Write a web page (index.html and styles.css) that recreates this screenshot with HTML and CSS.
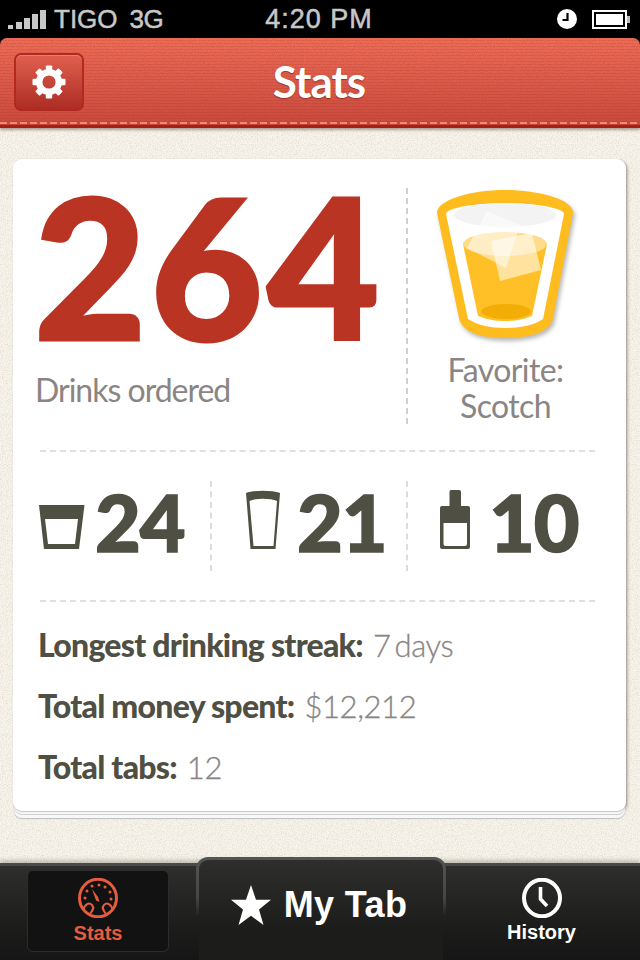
FILE: index.html
```html
<!DOCTYPE html>
<html lang="en">
<head>
<meta charset="utf-8">
<title>Stats</title>
<link rel="stylesheet" href="styles.css">
</head>
<body>
<div class="app">
  <div class="status">
    <div class="status-left">
      <svg class="signal" viewBox="0 0 38 19"><rect x="0" y="15" width="5" height="4"/><rect x="8" y="12" width="6" height="7"/><rect x="16" y="8" width="6" height="11"/><rect x="24" y="4" width="6" height="15"/><rect x="32" y="0" width="6" height="19"/></svg>
      <span class="carrier">TIGO</span><span class="net">3G</span>
    </div>
    <div class="time">4:20 PM</div>
    <div class="status-right">
      <svg class="alarm" viewBox="0 0 20 20"><circle cx="10" cy="10" r="10" fill="#fff"/><path d="M10.500 4v7H5.500" fill="none" stroke="#000" stroke-width="2.200"/></svg>
      <svg class="battery" viewBox="0 0 38 19"><rect x="1" y="1" width="33" height="17" fill="none" stroke="#fff" stroke-width="2"/><rect x="4" y="4" width="27" height="11" fill="#fff"/><rect x="35" y="6" width="3" height="7" fill="#bbb"/></svg>
    </div>
  </div>

  <header class="nav">
    <div class="nav-side">
      <button class="gear-btn" type="button" aria-label="Settings">
        <svg class="gear" viewBox="-17 -17 34 34">
          <circle r="9.800" fill="none" stroke="#fff" stroke-width="6.400"/>
          <g fill="#fff">
            <rect x="-3.200" y="-16.500" width="6.400" height="6" rx="1"/>
            <rect x="-3.200" y="-16.500" width="6.400" height="6" rx="1" transform="rotate(45)"/>
            <rect x="-3.200" y="-16.500" width="6.400" height="6" rx="1" transform="rotate(90)"/>
            <rect x="-3.200" y="-16.500" width="6.400" height="6" rx="1" transform="rotate(135)"/>
            <rect x="-3.200" y="-16.500" width="6.400" height="6" rx="1" transform="rotate(180)"/>
            <rect x="-3.200" y="-16.500" width="6.400" height="6" rx="1" transform="rotate(225)"/>
            <rect x="-3.200" y="-16.500" width="6.400" height="6" rx="1" transform="rotate(270)"/>
            <rect x="-3.200" y="-16.500" width="6.400" height="6" rx="1" transform="rotate(315)"/>
          </g>
        </svg>
      </button>
    </div>
    <h1 class="nav-title">Stats</h1>
    <div class="nav-side"></div>
  </header>

  <main class="content">
    <section class="card">
      <div class="hero">
        <div class="hero-main">
          <div class="big-num">264</div>
          <div class="big-label">Drinks ordered</div>
        </div>
        <div class="hero-fav">
          <svg class="scotch" viewBox="430 185 155 160">
            <path fill="#ffbc1f" d="M437 213C437 200 470 190 505 190S574 200 573 213L553 318C551 332 530 338 505 338S462 332 459 318Z"/>
            <path fill="#fff" d="M446 214C446 208 475 203 505 203S564 208 564 214L543 319C535 325 520 328 505 328S477 325 468 319Z"/>
            <ellipse cx="505" cy="215" rx="51" ry="12" fill="#f3f3f3"/>
            <path fill="#ffbf26" d="M463 244L478 316C488 320 496 321 505 321S522 320 532 316L547 244Z"/>
            <ellipse cx="505" cy="244" rx="42" ry="12" fill="#ffdc8a"/>
            <ellipse cx="506" cy="311.500" rx="25" ry="7.500" fill="#f2ae05"/>
            <path fill="#fff" fill-opacity=".5" d="M487 211L520 225 506 268 467 248Z"/>
            <path fill="#fff" fill-opacity=".55" d="M491 241L532 233 541 270 500 281Z"/>
          </svg>
          <div class="fav-label">Favorite:<br>Scotch</div>
        </div>
      </div>

      <div class="counts">
        <div class="count count-a">
          <svg class="ico-rock" viewBox="0 0 46 44"><path fill="#4f4f43" fill-rule="evenodd" d="M0 0H45.500L40 44H5ZM6 14L9 39H36L39 14Z"/></svg>
          <span class="count-num">24</span>
        </div>
        <div class="count count-b">
          <svg class="ico-pint" viewBox="0 0 34 59"><path fill="#4f4f43" fill-rule="evenodd" d="M0 3C8 0 26 0 34 3L29.500 59H4.500ZM3.500 11L7.500 56H27.500L31 11C24 8 10 8 3.500 11Z"/></svg>
          <span class="count-num">21</span>
        </div>
        <div class="count count-c">
          <svg class="ico-bottle" viewBox="0 0 30 59"><path fill="#4f4f43" fill-rule="evenodd" d="M11 0H19Q21 0 21 2V16H28Q30 16 30 18V57Q30 59 28 59H2Q0 59 0 57V18Q0 16 2 16H9.500V2Q9.500 0 11 0ZM3.500 33V54Q3.500 56 5.500 56H25Q27 56 27 54V33Z"/></svg>
          <span class="count-num">10</span>
        </div>
      </div>

      <ul class="facts">
        <li class="fact"><b class="fact-key">Longest drinking streak:</b><span class="fact-val">7 days</span></li>
        <li class="fact"><b class="fact-key">Total money spent:</b><span class="fact-val">$12,212</span></li>
        <li class="fact"><b class="fact-key">Total tabs:</b><span class="fact-val">12</span></li>
      </ul>
    </section>
  </main>

  <nav class="tabbar">
    <div class="tab-slot tab-slot-left">
      <div class="tab tab-active">
        <svg class="tab-ico" viewBox="0 0 40 40" fill="none" stroke="#e55c3f">
          <ellipse cx="20" cy="20" rx="18.500" ry="18.800" stroke-width="3"/>
          <path stroke-width="2" d="M5 32C7 26 11 24 14 27S14 33 12 36M35 32C33 26 29 24 26 27S26 33 28 36"/>
          <path fill="#e55c3f" stroke="none" d="M14 11L20 19 21.500 24 18 22.500Z"/>
          <g fill="#e55c3f" stroke="none"><circle cx="7" cy="20" r="1.500"/><circle cx="9" cy="13" r="1.500"/><circle cx="14" cy="8" r="1.500"/><circle cx="21" cy="7" r="1.500"/><circle cx="27" cy="9" r="1.500"/><circle cx="32" cy="14" r="1.500"/><circle cx="33" cy="21" r="1.500"/></g>
        </svg>
        <span class="tab-label label-active">Stats</span>
      </div>
    </div>
    <div class="tab-main">
      <svg class="star" viewBox="0 0 40 40"><path fill="#fff" d="M20 0L25 14.800H40L28 24.500 32.500 40 20 30.800 7.500 40 12 24.500 0 14.800H15Z"/></svg>
      <span class="tab-main-label">My Tab</span>
    </div>
    <div class="tab-slot tab-slot-right">
      <div class="tab">
        <svg class="tab-ico" viewBox="0 0 40 40" fill="none" stroke="#fff"><ellipse cx="20" cy="20" rx="18" ry="18.300" stroke-width="4"/><path stroke-width="3.600" d="M18.500 9V21L25 28"/></svg>
        <span class="tab-label">History</span>
      </div>
    </div>
  </nav>
</div>
</body>
</html>
```
FILE: styles.css
```css
* { box-sizing: border-box; }
html, body { margin: 0; padding: 0; }
body { width: 640px; height: 960px; overflow: hidden; background: #000; }
.app { width: 640px; height: 960px; display: flex; flex-direction: column; }

.status { height: 38px; background: #000; display: grid; grid-template-columns: 1fr auto 1fr; align-items: center; padding: 0 10px 0 8px; color: #c8c8c8; font: 26px/38px "Liberation Sans", sans-serif; -webkit-text-stroke: .5px #c8c8c8; }
.status-left { display: flex; align-items: center; }
.signal { width: 38px; height: 19px; fill: #c8c8c8; margin-right: 8px; }
.net { margin-left: 12px; letter-spacing: -.5px; }
.time { font-size: 27px; letter-spacing: 1px; }
.status-right { display: flex; align-items: center; justify-content: flex-end; gap: 15px; }
.alarm { width: 20px; height: 20px; }
.battery { width: 38px; height: 19px; }

.nav { height: 90px; display: grid; grid-template-columns: 1fr auto 1fr; align-items: start; border-radius: 7px 7px 0 0; position: relative; z-index: 1; border-bottom: 3px solid #a91d12; box-shadow: 0 2px 3px rgba(60,40,20,.4);
  background:
    repeating-linear-gradient(0deg, rgba(120,20,10,.1) 0 1px, transparent 1px 3px),
    url("data:image/svg+xml,%3Csvg xmlns='http://www.w3.org/2000/svg' width='200' height='200'%3E%3Cfilter id='n'%3E%3CfeTurbulence type='fractalNoise' baseFrequency='.9' numOctaves='2'/%3E%3CfeColorMatrix values='0 0 0 0 .4 0 0 0 0 .05 0 0 0 0 .03 0 0 0 .6 -.2'/%3E%3C/filter%3E%3Crect width='200' height='200' filter='url(%23n)'/%3E%3C/svg%3E"),
    linear-gradient(#f2705a, #cc4a3e); }
.nav::after { content: ""; height: 2px; background: repeating-linear-gradient(90deg, #f08a72 0 7px, transparent 7px 10px); position: absolute; left: 0; right: 0; bottom: 1px; }
.nav-side { padding: 15px 0 0 14px; }
.gear-btn { display: flex; width: 70px; height: 58px; padding: 0; align-items: center; justify-content: center; border: 2px solid #b3291f; border-radius: 7px; background: linear-gradient(#e0604f, #ad2c24); box-shadow: inset 0 1px 0 rgba(255,255,255,.2); }
.gear { width: 34px; height: 34px; }
.nav-title { margin: 15px 2px 0 0; color: #fff; font: 700 44px/56px Lato, sans-serif; letter-spacing: -1px; text-shadow: 0 1px 1px rgba(110,20,10,.6); }

.content { flex: 1; padding: 31px 14px 0 13px; min-height: 0;
  background:
    url("data:image/svg+xml,%3Csvg xmlns='http://www.w3.org/2000/svg' width='320' height='320'%3E%3Cfilter id='n'%3E%3CfeTurbulence type='fractalNoise' baseFrequency='.8' numOctaves='3'/%3E%3CfeColorMatrix values='0 0 0 0 .55 0 0 0 0 .48 0 0 0 0 .36 0 0 0 .9 -.38'/%3E%3C/filter%3E%3Crect width='320' height='320' filter='url(%23n)'/%3E%3C/svg%3E"),
    #f7f4ec; }
.card { height: 652px; padding: 0 31px 0 27px; background: #fff; border-radius: 9px; box-shadow: 0 1px 1px #c5c5c5, 1px 0 1px rgba(0,0,0,.12), 0 4px 0 -1px #f8f8f8, 0 5px 0 -1px #cfcfcf, 0 8px 0 -1px #f8f8f8, 0 9px 1px -1px #bdbdbd, 2px 2px 3px rgba(90,80,60,.35); }

.hero { height: 293px; display: flex; align-items: flex-start; border-bottom: 2px dashed #e0e0e0; }
.hero-main { width: 366px; flex: none; padding-top: 30px; }
.big-num { color: #b93423; font: 900 194px/153px Lato, sans-serif; letter-spacing: 4px; margin-left: -6px; -webkit-text-stroke: 3px #b93423; white-space: nowrap; }
.big-label { margin-top: 28px; margin-left: -5px; color: #8a8583; font: 400 32px/40px Lato, sans-serif; letter-spacing: -1px; }
.hero-fav { width: 200px; flex: none; height: 236px; margin-top: 29px; border-left: 2px dashed #d0d0d0; display: flex; flex-direction: column; align-items: center; }
.scotch { width: 155px; height: 160px; margin: -3px 0 0 0; flex: none; filter: drop-shadow(2px 3px 2px rgba(0,0,0,.28)); }
.fav-label { margin-top: 7px; color: #8a8583; font: 400 32px/36px Lato, sans-serif; letter-spacing: -.6px; text-align: center; margin-right: 3px; }

.counts { height: 150px; display: flex; align-items: center; border-bottom: 2px dashed #e0e0e0; }
.count { height: 90px; display: flex; align-items: center; }
.count + .count { border-left: 2px dashed #dcdcdc; }
.count-a { width: 170px; gap: 10px; }
.count-b { width: 196px; padding-left: 34px; gap: 17px; }
.count-c { flex: 1; padding-left: 32px; gap: 19px; }
.count-num { color: #4f4f43; font: 900 79px/82px Lato, sans-serif; letter-spacing: -1px; padding-bottom: 8px; -webkit-text-stroke: 1.500px #4f4f43; }
.ico-rock { width: 46px; height: 44px; margin-top: 2px; margin-left: -1px; }
.ico-pint { width: 34px; height: 59px; margin-bottom: 13px; }
.ico-bottle { width: 30px; height: 59px; margin-bottom: 13px; }

.facts { list-style: none; margin: 0 0 0 -2px; padding: 12px 0 0; }
.fact { height: 61px; display: flex; align-items: center; gap: 10px; }
.fact-key { color: #4f4f43; font: 900 32px/40px Lato, sans-serif; letter-spacing: -.75px; }
.fact-val { color: #8a8583; font: 300 31px/40px Lato, sans-serif; letter-spacing: -.4px; word-spacing: -4px; -webkit-text-stroke: .3px #8a8583; }

.tabbar { height: 97px; flex: none; display: flex; position: relative; z-index: 2; border-top: 3px solid #4a4a48; box-shadow: 0 -3px 4px rgba(60,50,40,.25); background: linear-gradient(#2e2e2d, #1b1b1a 70%, #161616); }
.tab-slot { padding: 5px 0 0; display: flex; }
.tab-slot-left { width: 196px; padding-left: 28px; }
.tab-slot-right { width: 194px; justify-content: center; padding-right: 3px; }
.tab { width: 140px; height: 80px; display: flex; flex-direction: column; align-items: center; padding-top: 7px; }
.tab-active { background: #121212; border-radius: 5px; box-shadow: 0 0 0 1px #2c2c2c; }
.tab-ico { width: 40px; height: 40px; flex: none; }
.tab-label { color: #fff; font: 700 20px/24px "Liberation Sans", sans-serif; margin-top: 2px; }
.label-active { color: #e55c3f; margin-top: 3px; }
.tab-main { width: 250px; height: 103px; margin-top: -9px; flex: none; display: flex; align-items: flex-start; justify-content: center; gap: 13px; padding: 25px 4px 0 0; border: 3px solid transparent; border-bottom: 0; border-radius: 12px 12px 0 0; background: linear-gradient(#2e2e2d, #1c1c1b 70%) padding-box, linear-gradient(#555553, #454543 40%, transparent 58%) border-box; }
.star { width: 40px; height: 40px; flex: none; }
.tab-main-label { color: #fff; font: 700 36px/40px "Liberation Sans", sans-serif; letter-spacing: .4px; }
```
